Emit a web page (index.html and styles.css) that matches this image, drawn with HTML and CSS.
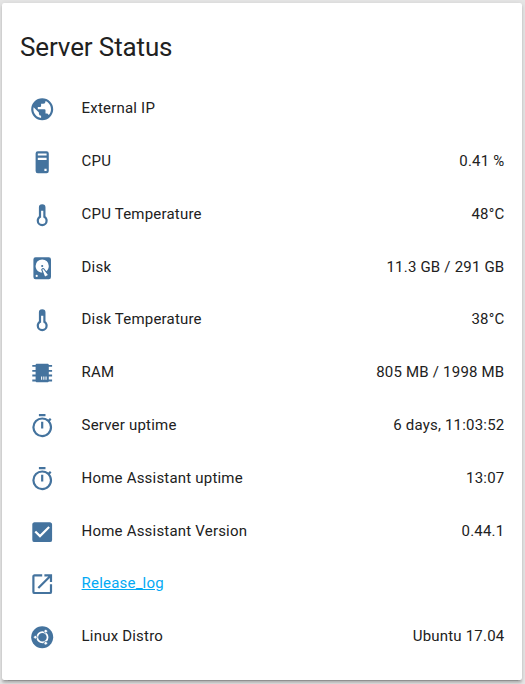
FILE: index.html
```html
<!DOCTYPE html>
<html lang="en">
<head>
<meta charset="utf-8">
<title>Server Status</title>
<link rel="stylesheet" href="styles.css">
</head>
<body>
<svg class="defs" aria-hidden="true">
  <symbol id="thermometer" viewBox="0 0 24 24"><path d="M17,17A5,5 0 0,1 12,22A5,5 0 0,1 7,17C7,15.36 7.79,13.91 9,13V5A3,3 0 0,1 12,2A3,3 0 0,1 15,5V13C16.21,13.91 17,15.36 17,17M11,8V14.17C9.83,14.58 9,15.69 9,17A3,3 0 0,0 12,20A3,3 0 0,0 15,17C15,15.69 14.17,14.58 13,14.17V8H11Z"/></symbol>
  <symbol id="timer" viewBox="0 0 24 24"><path d="M12,20A7,7 0 0,1 5,13A7,7 0 0,1 12,6A7,7 0 0,1 19,13A7,7 0 0,1 12,20M19.03,7.39L20.45,5.97C20,5.46 19.55,5 19.04,4.56L17.62,6C16.07,4.74 14.12,4 12,4A9,9 0 0,0 3,13A9,9 0 0,0 12,22C17,22 21,17.97 21,13C21,10.88 20.26,8.93 19.03,7.39M11,14H13V8H11M15,1H9V3H15V1Z"/></symbol>
</svg>
<main class="card">
  <h1 class="title">Server Status</h1>
  <div class="row">
    <svg class="icon" viewBox="0 0 24 24"><path d="M17.9,17.39C17.64,16.59 16.89,16 16,16H15V13A1,1 0 0,0 14,12H8V10H10A1,1 0 0,0 11,9V7H13A2,2 0 0,0 15,5V4.59C17.93,5.77 20,8.64 20,12C20,14.08 19.2,15.97 17.9,17.39M11,19.93C7.05,19.44 4,16.08 4,12C4,11.38 4.08,10.78 4.21,10.21L9,15V16A2,2 0 0,0 11,18M12,2A10,10 0 0,0 2,12A10,10 0 0,0 12,22A10,10 0 0,0 22,12A10,10 0 0,0 12,2Z"/></svg>
    <span class="name">External IP</span>
  </div>
  <div class="row">
    <svg class="icon" viewBox="0 0 24 24"><path d="M8,2H16A2,2 0 0,1 18,4V20A2,2 0 0,1 16,22H8A2,2 0 0,1 6,20V4A2,2 0 0,1 8,2M8,4V6H16V4H8M16,8H8V10H16V8M16,18H14V20H16V18Z"/></svg>
    <span class="name">CPU</span><span class="state">0.41 %</span>
  </div>
  <div class="row">
    <svg class="icon"><use href="#thermometer"/></svg>
    <span class="name">CPU Temperature</span><span class="state">48°C</span>
  </div>
  <div class="row">
    <svg class="icon" viewBox="0 0 24 24"><path d="M6,2H18A2,2 0 0,1 20,4V20A2,2 0 0,1 18,22H6A2,2 0 0,1 4,20V4A2,2 0 0,1 6,2M12,4A6,6 0 0,0 6,10C6,13.31 8.69,16 12.1,16L11.22,13.77C10.95,13.29 11.11,12.68 11.59,12.4L12.45,11.9C12.93,11.63 13.54,11.79 13.82,12.27L15.74,14.69C17.12,13.59 18,11.9 18,10A6,6 0 0,0 12,4M12,9A1,1 0 0,1 13,10A1,1 0 0,1 12,11A1,1 0 0,1 11,10A1,1 0 0,1 12,9M7,18A1,1 0 0,0 6,19A1,1 0 0,0 7,20A1,1 0 0,0 8,19A1,1 0 0,0 7,18M12.09,13.27L14.58,19.58L17.17,18.08L12.95,12.77L12.09,13.27Z"/></svg>
    <span class="name">Disk</span><span class="state">11.3 GB / 291 GB</span>
  </div>
  <div class="row">
    <svg class="icon"><use href="#thermometer"/></svg>
    <span class="name">Disk Temperature</span><span class="state">38°C</span>
  </div>
  <div class="row">
    <svg class="icon" viewBox="0 0 24 24"><path fill-rule="evenodd" d="M7,3.5H17A1,1 0 0,1 18,4.5H21V6.2H18V9H21V10.7H18V13.3H21V15H18V17.8H21V19.5H18A1,1 0 0,1 17,20.2H7A1,1 0 0,1 6,19.5H3V17.8H6V15H3V13.3H6V10.7H3V9H6V6.2H3V4.5H6A1,1 0 0,1 7,3.5M11,15V18H12V15H11M13,15V18H14V15H13M15,15V18H16V15H15Z"/></svg>
    <span class="name">RAM</span><span class="state">805 MB / 1998 MB</span>
  </div>
  <div class="row">
    <svg class="icon"><use href="#timer"/></svg>
    <span class="name">Server uptime</span><span class="state">6 days, 11:03:52</span>
  </div>
  <div class="row">
    <svg class="icon"><use href="#timer"/></svg>
    <span class="name">Home Assistant uptime</span><span class="state">13:07</span>
  </div>
  <div class="row">
    <svg class="icon" viewBox="0 0 24 24"><path d="M10,17L5,12L6.41,10.58L10,14.17L17.59,6.58L19,8M19,3H5C3.89,3 3,3.89 3,5V19A2,2 0 0,0 5,21H19A2,2 0 0,0 21,19V5C21,3.89 20.1,3 19,3Z"/></svg>
    <span class="name">Home Assistant Version</span><span class="state">0.44.1</span>
  </div>
  <div class="row">
    <svg class="icon" viewBox="0 0 24 24"><path d="M14,3V5H17.59L7.76,14.83L9.17,16.24L19,6.41V10H21V3M19,19H5V5H12V3H5C3.89,3 3,3.9 3,5V19A2,2 0 0,0 5,21H19A2,2 0 0,0 21,19V12H19V19Z"/></svg>
    <a class="name link" href="#">Release_log</a>
  </div>
  <div class="row">
    <svg class="icon" viewBox="0 0 24 24">
      <circle cx="12" cy="12" r="10"/>
      <circle class="ring" cx="12.2" cy="12" r="4.7"/>
      <g class="dots"><circle cx="5.8" cy="12" r="1.6"/><circle cx="15.2" cy="6.5" r="1.6"/><circle cx="15.2" cy="17.5" r="1.6"/></g>
    </svg>
    <span class="name">Linux Distro</span><span class="state">Ubuntu 17.04</span>
  </div>
</main>
</body>
</html>
```
FILE: styles.css
```css
body {
  margin: 0;
  padding: 3px 3px 4px 2px;
  height: 684px;
  box-sizing: border-box;
  overflow: hidden;
  background: #e5e5e5;
  font-family: Roboto, sans-serif;
  color: #212121;
}
.defs { display: none; }
.card {
  height: 677px;
  box-sizing: border-box;
  padding: 27px 17.6px 0 18px;
  background: #fff;
  border-radius: 2.2px;
  box-shadow: 0 2.2px 2.2px rgba(0,0,0,.14), 0 1.1px 5.5px rgba(0,0,0,.12), 0 3.3px 1.1px -2.2px rgba(0,0,0,.2);
}
.title {
  margin: 0 0 16.6px;
  font-size: 26px;
  line-height: 35.2px;
  font-weight: 400;
  letter-spacing: -.13px;
}
.row {
  display: flex;
  align-items: center;
  height: 52.8px;
  padding-left: 9px;
  font-size: 15px;
  line-height: 22px;
  letter-spacing: .2px;
}
.icon {
  flex: none;
  width: 26.4px;
  height: 26.4px;
  margin: 2.4px 26.2px 0 0;
  fill: #44739e;
}
.name { flex: 1; }
.link { color: #03a9f4; text-decoration: underline; }
.ring { fill: none; stroke: #fff; stroke-width: 1.6; }
.dots { fill: #fff; stroke: #44739e; stroke-width: .7; }
```
